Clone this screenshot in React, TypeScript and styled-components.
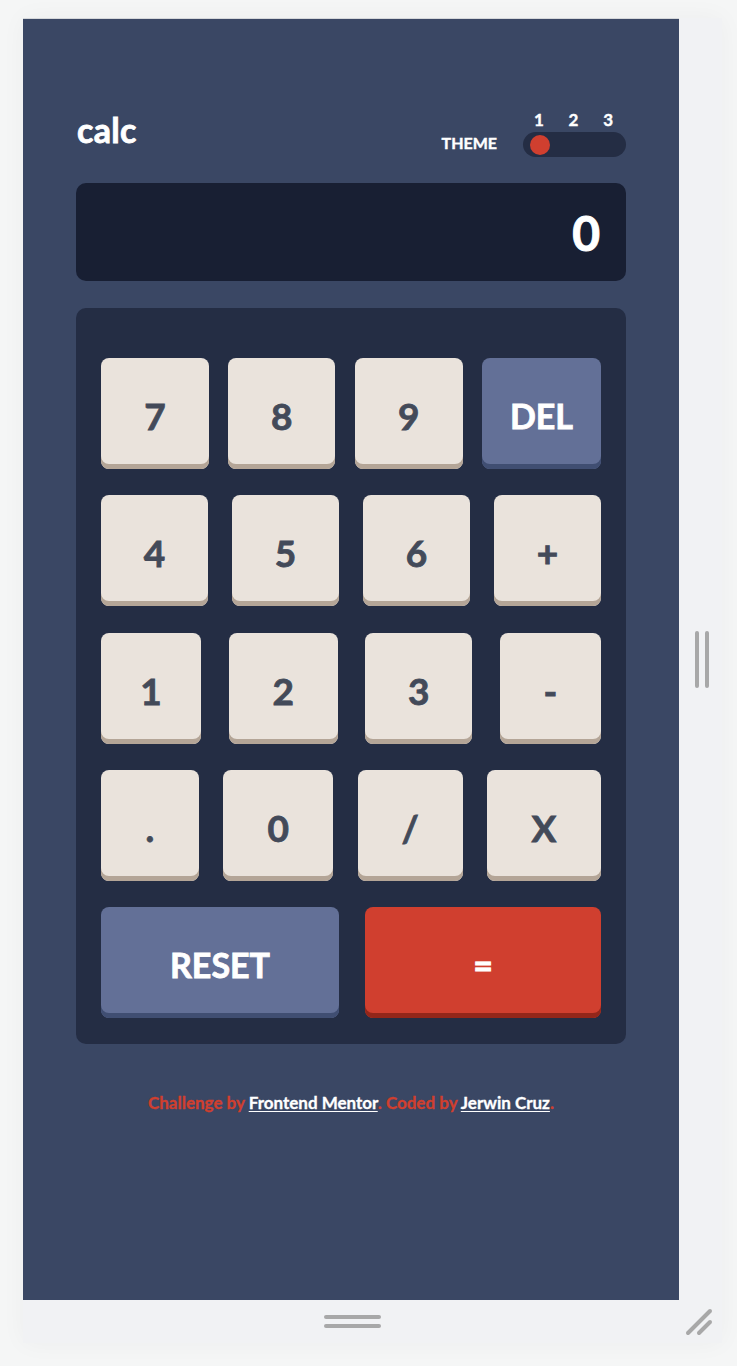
import styled, { createGlobalStyle } from "styled-components";

const GlobalStyle = createGlobalStyle`
  html, body {
    margin: 0;
    padding: 0;
    background: #f5f6f6;
  }
  body {
    font-family: "Lato", "Liberation Sans", sans-serif;
  }
`;

type KeyKind = "plain" | "blue" | "red";

const rows: { label: string; w: number; kind?: KeyKind }[][] = [
  [
    { label: "7", w: 108 },
    { label: "8", w: 107 },
    { label: "9", w: 108 },
    { label: "DEL", w: 119, kind: "blue" },
  ],
  [
    { label: "4", w: 107 },
    { label: "5", w: 107 },
    { label: "6", w: 107 },
    { label: "+", w: 107 },
  ],
  [
    { label: "1", w: 100 },
    { label: "2", w: 109 },
    { label: "3", w: 107 },
    { label: "-", w: 101 },
  ],
  [
    { label: ".", w: 98 },
    { label: "0", w: 110 },
    { label: "/", w: 105 },
    { label: "X", w: 114 },
  ],
  [
    { label: "RESET", w: 238, kind: "blue" },
    { label: "=", w: 236, kind: "red" },
  ],
];

export default function App() {
  return (
    <>
      <GlobalStyle />
      <Stage>
        <Frame>
          <Screen>
            <Calculator>
              <Header>
                <Logo>calc</Logo>
                <ThemeBox>
                  <ThemeLabel>THEME</ThemeLabel>
                  <Switcher>
                    <Numbers>
                      <span>1</span>
                      <span>2</span>
                      <span>3</span>
                    </Numbers>
                    <Track>
                      <Knob />
                    </Track>
                  </Switcher>
                </ThemeBox>
              </Header>

              <Display>0</Display>

              <Keypad>
                {rows.map((row, i) => (
                  <KeyRow key={i}>
                    {row.map((k) => (
                      <Key key={k.label} $kind={k.kind || "plain"} style={{ width: k.w }}>
                        {k.label}
                      </Key>
                    ))}
                  </KeyRow>
                ))}
              </Keypad>

              <Footer>
                Challenge by <a href="#">Frontend Mentor</a>. Coded by{" "}
                <a href="#">Jerwin Cruz</a>.
              </Footer>
            </Calculator>
          </Screen>
          <SideGrip>
            <GripBar $vertical />
            <GripBar $vertical />
          </SideGrip>
          <BottomGrip>
            <BottomHandle>
              <GripBar />
              <GripBar />
            </BottomHandle>
            <Corner viewBox="0 0 28 28">
              <line x1="3" y1="25" x2="25" y2="3" />
              <line x1="14" y1="25" x2="25" y2="14" />
            </Corner>
          </BottomGrip>
        </Frame>
      </Stage>
    </>
  );
}

const Stage = styled.div`
  padding: 18px 0 0 23px;
  min-height: 1366px;
  box-sizing: border-box;
`;

const Frame = styled.div`
  display: grid;
  grid-template-columns: 656px 43px;
  grid-template-rows: 1282px 43px;
  width: 699px;
  box-shadow: 0 0 24px rgba(0, 0, 0, 0.04);
`;

const Screen = styled.div`
  background: #3a4764;
  border-top: 1px solid #d5d7da;
  box-sizing: border-box;
  padding-top: 92px;
`;

const Calculator = styled.div`
  width: 550px;
  margin: 0 auto;
`;

const Header = styled.div`
  display: flex;
  justify-content: space-between;
  align-items: flex-end;
  color: #fff;
`;

const Logo = styled.h1`
  margin: 0 0 10px 1px;
  font-size: 34px;
  line-height: 34px;
  font-weight: 700;
  letter-spacing: 0.3px;
  -webkit-text-stroke: 0.8px currentColor;
`;

const ThemeBox = styled.div`
  display: flex;
  align-items: flex-end;
  gap: 26px;
`;

const ThemeLabel = styled.span`
  font-size: 16px;
  font-weight: 700;
  margin-bottom: 5px;
  -webkit-text-stroke: 0.4px currentColor;
`;

const Switcher = styled.div`
  display: flex;
  flex-direction: column;
  width: 103px;
  gap: 3px;
`;

const Numbers = styled.div`
  display: flex;
  justify-content: space-between;
  padding: 0 13px 0 11px;
  font-size: 17px;
  font-weight: 700;
  line-height: 18px;
  -webkit-text-stroke: 0.4px currentColor;
`;

const Track = styled.div`
  height: 25px;
  background: #242d44;
  border-radius: 13px;
  display: flex;
  align-items: center;
  padding-left: 7px;
`;

const Knob = styled.div`
  width: 20px;
  height: 20px;
  border-radius: 50%;
  background: #d03f2f;
`;

const Display = styled.div`
  margin-top: 26px;
  height: 98px;
  background: #181f33;
  border-radius: 10px;
  display: flex;
  align-items: center;
  justify-content: flex-end;
  padding: 0 26px 0;
  box-sizing: border-box;
  color: #fff;
  font-size: 48px;
  font-weight: 700;
  -webkit-text-stroke: 1px currentColor;
`;

const Keypad = styled.div`
  margin-top: 27px;
  background: #242d44;
  border-radius: 10px;
  padding: 50px 25px 26px;
  display: flex;
  flex-direction: column;
  gap: 26.25px;
`;

const KeyRow = styled.div`
  display: flex;
  justify-content: space-between;
`;

const keyColors: Record<KeyKind, { bg: string; shadow: string; fg: string; size: string }> = {
  plain: { bg: "#eae3dc", shadow: "#b4a597", fg: "#434a59", size: "37px" },
  blue: { bg: "#637097", shadow: "#404e72", fg: "#ffffff", size: "34px" },
  red: { bg: "#d03f2f", shadow: "#93261a", fg: "#ffffff", size: "34px" },
};

const Key = styled.button<{ $kind: KeyKind }>`
  height: 111px;
  border: none;
  border-radius: 8px;
  background: ${(p) => keyColors[p.$kind].bg};
  box-shadow: inset 0 -5px 0 ${(p) => keyColors[p.$kind].shadow};
  color: ${(p) => keyColors[p.$kind].fg};
  font-family: "Lato", "Liberation Sans", sans-serif;
  font-size: ${(p) => keyColors[p.$kind].size};
  font-weight: 700;
  -webkit-text-stroke: 0.8px currentColor;
  padding: 4px 0 0;
  display: flex;
  align-items: center;
  justify-content: center;
  cursor: pointer;
`;

const Footer = styled.p`
  margin: 48px 0 0;
  text-align: center;
  font-size: 17px;
  font-weight: 700;
  color: #d03f2f;
  -webkit-text-stroke: 0.3px currentColor;

  a {
    color: #fff;
    text-decoration: underline;
    text-underline-offset: 2px;
  }
`;

const SideGrip = styled.div`
  background: #f1f2f4;
  display: flex;
  justify-content: center;
  align-items: center;
  gap: 6px;
  padding-left: 2px;
`;

const GripBar = styled.span<{ $vertical?: boolean }>`
  display: block;
  background: #a8a8a8;
  border-radius: 2px;
  width: ${(p) => (p.$vertical ? "4px" : "57px")};
  height: ${(p) => (p.$vertical ? "57px" : "4px")};
`;

const BottomGrip = styled.div`
  grid-column: 1 / span 2;
  background: #f1f2f4;
  display: flex;
  align-items: center;
  justify-content: center;
  position: relative;
`;

const BottomHandle = styled.div`
  display: flex;
  flex-direction: column;
  gap: 5px;
  margin-left: -41px;
`;

const Corner = styled.svg`
  position: absolute;
  right: 9px;
  top: 8px;
  width: 28px;
  height: 28px;

  line {
    stroke: #a8a8a8;
    stroke-width: 4;
    stroke-linecap: round;
  }
`;
